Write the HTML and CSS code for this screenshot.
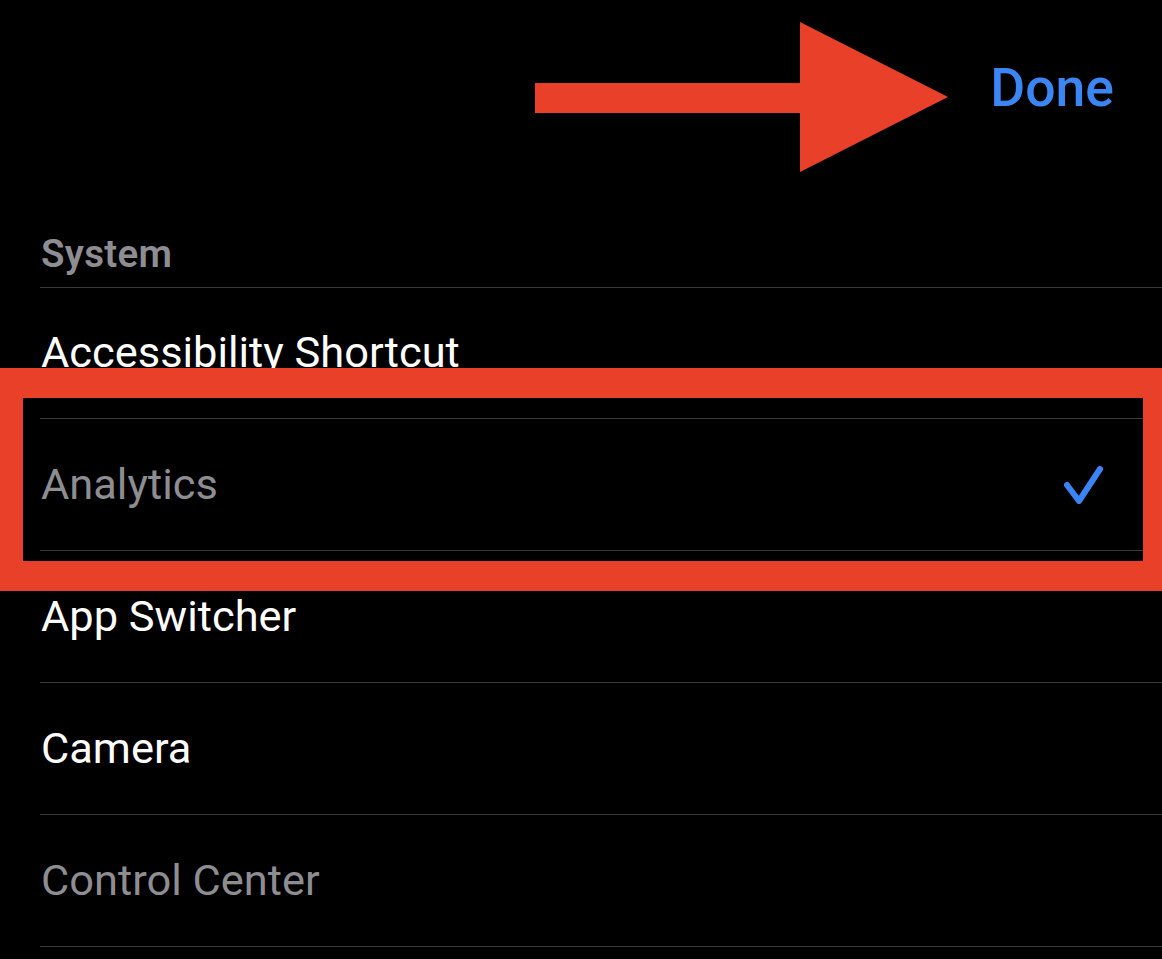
FILE: index.html
```html
<!DOCTYPE html>
<html lang="en">
<head>
<meta charset="utf-8">
<title>Shortcut</title>
<link rel="stylesheet" href="styles.css">
</head>
<body>
<div class="screen">
  <header class="nav">
    <span class="done">Done</span>
  </header>
  <div class="section-header">System</div>
  <ul class="list">
    <li class="row">Accessibility Shortcut</li>
    <li class="row dim selected">
      <span>Analytics</span>
      <svg class="check" width="44" height="40" viewBox="0 0 44 40" aria-hidden="true">
        <polyline points="5,21 17,37 38,5" fill="none" stroke="#3a84f5" stroke-width="6" stroke-linecap="round" stroke-linejoin="round"/>
      </svg>
    </li>
    <li class="row">App Switcher</li>
    <li class="row">Camera</li>
    <li class="row dim">Control Center</li>
  </ul>

  <svg class="annot-arrow" width="413" height="150" viewBox="0 0 413 150" aria-hidden="true">
    <polygon points="0,61 265,61 265,0 413,75 265,150 265,91 0,91" fill="#e84029"/>
  </svg>
  <div class="annot-box"></div>
</div>
</body>
</html>
```

FILE: styles.css
```css
html, body {
  margin: 0;
  padding: 0;
  background: #000;
}

.screen {
  position: relative;
  width: 1162px;
  height: 959px;
  overflow: hidden;
  background: #000;
  font-family: Roboto, "Liberation Sans", Arial, sans-serif;
  color: #fff;
}

.nav {
  height: 176px;
  display: flex;
  align-items: center;
  justify-content: flex-end;
  padding-right: 48px;
}

.done {
  color: #3b86f5;
  font-size: 53.5px;
  font-weight: 500;
  line-height: 1;
}

.section-header {
  height: 111px;
  box-sizing: border-box;
  display: flex;
  align-items: flex-end;
  padding-left: 41px;
  padding-bottom: 14px;
  color: #8d8d92;
  font-size: 38.5px;
  font-weight: 600;
  line-height: 1;
  letter-spacing: 0.3px;
}

.list {
  list-style: none;
  margin: 0 0 0 40px;
  padding: 0;
  border-top: 1px solid #39393c;
}

.row {
  height: 131px;
  border-bottom: 1px solid #39393c;
  display: flex;
  align-items: center;
  justify-content: space-between;
  padding-left: 1px;
  padding-right: 56px;
  font-size: 43.4px;
  font-weight: 400;
  line-height: 1;
  color: #fff;
}

.row:first-child {
  height: 130px;
}

.row.dim {
  color: #8d8d92;
}

.check {
  display: block;
  margin-top: -2px;
}

.annot-arrow {
  position: absolute;
  left: 535px;
  top: 22px;
}

.annot-box {
  position: absolute;
  left: -7px;
  top: 368px;
  width: 1180px;
  height: 223px;
  box-sizing: border-box;
  border: 30px solid #e84029;
}
```
